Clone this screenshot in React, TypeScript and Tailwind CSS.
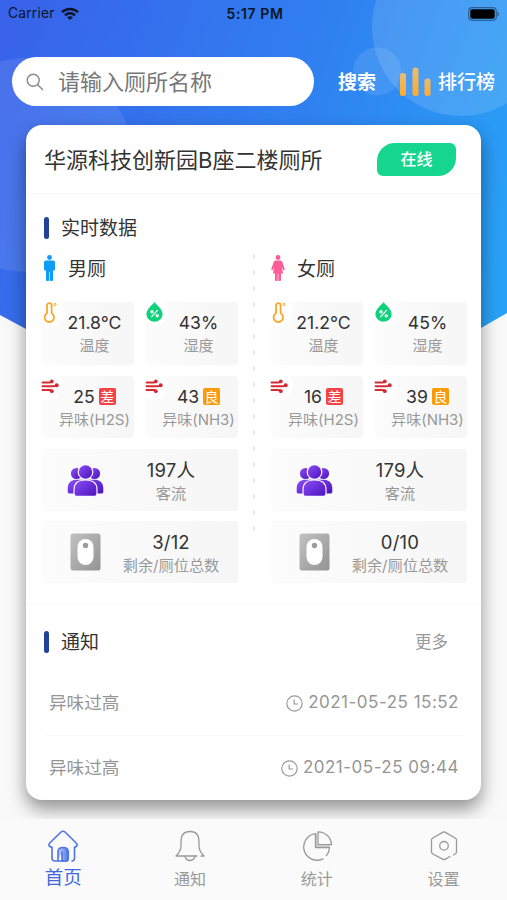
import type { ReactNode } from "react";

function Backdrop() {
  return (
    <svg className="absolute left-0 top-0" width="507" height="345" viewBox="0 0 507 345">
      <defs>
        <linearGradient id="sky" gradientUnits="userSpaceOnUse" x1="0" y1="60" x2="507" y2="240">
          <stop offset="0" stopColor="#3863ea" />
          <stop offset="0.55" stopColor="#3080f0" />
          <stop offset="1" stopColor="#29a1f6" />
        </linearGradient>
        <clipPath id="hero">
          <path d="M0 0H507V313L481 328L460 340H48L26 329L0 315Z" />
        </clipPath>
      </defs>
      <g clipPath="url(#hero)">
        <rect width="507" height="345" fill="url(#sky)" />
        <circle cx="28" cy="165" r="107" fill="#fff" fillOpacity="0.09" />
        <circle cx="461" cy="27" r="89" fill="#fff" fillOpacity="0.13" />
        <circle cx="377" cy="71.500" r="24" fill="#fff" fillOpacity="0.1" />
      </g>
    </svg>
  );
}

function StatusBar() {
  return (
    <div className="flex h-[27px] items-center justify-between pl-2 pr-[7px] text-[#0b1526]">
      <div className="flex w-[198px] items-center gap-[6px] text-[13.800px] tracking-[0.2px]">
        <span>Carrier</span>
        <svg width="18" height="14" viewBox="0 0 18 14">
          <g fill="none" stroke="#0b1526" strokeWidth="2.500">
            <path d="M1 5.200C5.500 .9 12.500 .9 17 5.200" />
            <path d="M4 8.300C6.800 5.700 11.200 5.700 14 8.300" />
          </g>
          <path d="M6 10.200C7.700 8.900 10.300 8.900 12 10.200L9 13Z" fill="#0b1526" />
        </svg>
      </div>
      <span className="whitespace-nowrap text-[14px] font-semibold tracking-[0.6px]">5:17 PM</span>
      <div className="flex w-[196px] justify-end">
        <svg width="32" height="14" viewBox="0 0 32 14">
          <rect x="0.700" y="0.700" width="27.600" height="12.600" rx="3.500" fill="none" stroke="#2a5f97" strokeWidth="1.200" />
          <rect x="2.300" y="2.300" width="24.400" height="9.400" rx="2" fill="#000" />
          <path d="M29.500 4.500C31.500 5.300 31.500 8.700 29.500 9.500Z" fill="#2a5f97" />
        </svg>
      </div>
    </div>
  );
}

function SearchRow() {
  return (
    <div className="mt-[30px] flex h-[49px] items-center pl-3">
      <div className="flex h-full w-[302px] items-center rounded-full bg-white pl-[14px]">
        <svg width="18" height="18" viewBox="0 0 18 18" fill="none" stroke="#8a8a8a" strokeWidth="1.400">
          <circle cx="7.200" cy="7.200" r="6" />
          <path d="M11.500 11.500L17 17" />
        </svg>
        <span className="ml-[14px] text-[22px] leading-none text-[#777]">请输入厕所名称</span>
      </div>
      <span className="ml-6 pt-[2px] text-[19px] font-bold leading-none text-white">搜索</span>
      <svg className="ml-6" width="31" height="29" viewBox="0 0 31 29">
        <defs>
          <linearGradient id="gold" x1="0" y1="0" x2="0" y2="1">
            <stop offset="0" stopColor="#e5bd73" />
            <stop offset="1" stopColor="#ffab2e" />
          </linearGradient>
        </defs>
        <rect x="0" y="6" width="6" height="23" rx="2.500" fill="url(#gold)" />
        <rect x="12.500" y="0.500" width="6" height="28.500" rx="2.500" fill="url(#gold)" />
        <rect x="24.500" y="11.500" width="6" height="17.500" rx="2.500" fill="url(#gold)" />
      </svg>
      <span className="ml-[7px] pt-[2px] text-[19px] font-medium leading-none text-white">排行榜</span>
    </div>
  );
}

function Thermometer() {
  return (
    <svg width="14" height="21" viewBox="0 0 14 21" fill="none" stroke="#fba72b" strokeWidth="1.800">
      <path d="M4 11.200V3.500a2.300 2.300 0 0 1 4.600 0v7.700a4.700 4.700 0 1 1-4.600 0Z" />
      <circle cx="12" cy="2.500" r="1.100" strokeWidth="1" />
    </svg>
  );
}

function Drop() {
  return (
    <svg width="17" height="20" viewBox="0 0 17 20">
      <path d="M8.500 0C10.500 3.200 16.600 6.900 16.600 12.200a8.100 7.600 0 0 1-16.200 0C.4 6.900 6.500 3.200 8.500 0Z" fill="#10d17c" />
      <g fill="none" stroke="#fff" strokeWidth="1.200">
        <path d="M11.700 8.200L5.300 15.200" />
        <circle cx="6" cy="9.700" r="1.100" />
        <circle cx="11.200" cy="13.800" r="1.100" />
      </g>
    </svg>
  );
}

function Wind() {
  return (
    <svg width="18" height="15" viewBox="0 0 18 15">
      <g fill="none" stroke="#d52a31" strokeWidth="1.900" strokeLinecap="round">
        <path d="M1.500 3.500H8.500C10 3.500 10.800 3 11 2" />
        <path d="M1.500 7.300H12.500C14 7.300 15 7.100 15.500 6.500" />
        <path d="M1.500 11H8.500C10 11 10.800 11.500 11 12.500" />
      </g>
      <g fill="#d52a31">
        <circle cx="10.800" cy="2.400" r="1.900" />
        <circle cx="15.700" cy="6.300" r="2" />
        <circle cx="10.800" cy="12.200" r="1.900" />
      </g>
    </svg>
  );
}

function People() {
  return (
    <svg width="37" height="33" viewBox="0 0 37 33">
      <defs>
        <linearGradient id="violet" x1="0" y1="0" x2="1" y2="1">
          <stop offset="0" stopColor="#8b50f5" />
          <stop offset="1" stopColor="#4c10be" />
        </linearGradient>
      </defs>
      <g fill="url(#violet)">
        <circle cx="9.500" cy="9.500" r="5.600" />
        <circle cx="27.500" cy="9.500" r="5.600" />
        <path d="M.7 28V24.500C.7 19 4 16.500 8 15.800H29C33 16.500 36.300 19 36.300 24.500V28Q36.300 29.500 34.300 29.500H2.700Q.7 29.500 .7 28Z" />
      </g>
      <g fill="url(#violet)" stroke="#faf7ff" strokeWidth="1.200">
        <path d="M7 29.500V25.500C7 19.500 10.500 16 18.500 16S30 19.500 30 25.500V29.500Q30 32.400 27.500 32.400H9.500Q7 32.400 7 29.500Z" />
        <circle cx="18.500" cy="8" r="7.300" />
      </g>
    </svg>
  );
}

function Stall() {
  return (
    <svg width="31" height="38" viewBox="0 0 31 38">
      <defs>
        <linearGradient id="steel" x1="0" y1="0" x2="1" y2="1">
          <stop offset="0" stopColor="#c2c2c2" />
          <stop offset="1" stopColor="#939393" />
        </linearGradient>
      </defs>
      <rect x="0.500" y="0.500" width="30" height="37" rx="2.500" fill="url(#steel)" />
      <rect x="7.500" y="6" width="16" height="26" rx="8" fill="#fff" />
      <circle cx="15.500" cy="12.500" r="2.700" fill="#9b9b9b" />
    </svg>
  );
}

function Man() {
  return (
    <svg width="11" height="26" viewBox="0 0 11 26" fill="#0e9cf7">
      <circle cx="5.500" cy="2.500" r="2.400" />
      <path d="M2 5.500H9Q11 5.500 11 7.500V14.500Q11 15.500 9.500 15.500H9V25Q9 26 8 26H6.500Q5.800 26 5.800 25V17H5.200V25Q5.200 26 4.500 26H3Q2 26 2 25V15.500H1.500Q0 15.500 0 14.500V7.500Q0 5.500 2 5.500Z" />
    </svg>
  );
}

function Woman() {
  return (
    <svg width="14" height="26" viewBox="0 0 14 26" fill="#ff5c98">
      <circle cx="7" cy="2.500" r="2.400" />
      <path d="M4.500 5.500H9.500Q10.800 5.500 11.300 7L13.700 14Q13.700 15.500 12.400 15.200L10.800 12L12 18.500H10V25Q10 26 9 26H8Q7.300 26 7.300 25V18.500H6.700V25Q6.700 26 6 26H5Q4 26 4 25V18.500H2L3.200 12L1.600 15.200Q.3 15.500 .3 14L2.700 7Q3.200 5.500 4.500 5.500Z" />
    </svg>
  );
}

const tile = "bg-gradient-to-r from-[#fcfcfc] to-[#f6f6f6] rounded-[4px]";

function Sensor({ icon, value, label, badge, badgeClass }: { icon: ReactNode; value: string; label: string; badge?: string; badgeClass?: string }) {
  return (
    <div className={"relative w-[92px] pl-[13px] pt-[9px] text-center leading-[23px] " + tile}>
      <div className="absolute -left-[6px] -top-[4px] flex size-7 items-center justify-center rounded-full bg-white">{icon}</div>
      <div className="flex h-[23px] items-center justify-center gap-1 whitespace-nowrap text-[17.600px] text-[#333]">
        <span>{value}</span>
        {badge && (
          <span className={"flex size-[17px] items-center justify-center rounded-[2px] text-[14px] leading-none text-white " + badgeClass}>{badge}</span>
        )}
      </div>
      <div className="flex justify-center whitespace-nowrap text-[15px] text-[#999]">{label}</div>
    </div>
  );
}

function Wide({ icon, value, label }: { icon: ReactNode; value: string; label: string }) {
  return (
    <div className={"flex h-[62px] " + tile}>
      <div className="flex w-[86px] items-center justify-center">{icon}</div>
      <div className="w-[86px] grow pr-[24px] pt-[9px]">
        <div className="flex justify-center whitespace-nowrap text-[18.500px] leading-[24px] tracking-[0.2px] text-[#333]">{value}</div>
        <div className="flex justify-center whitespace-nowrap text-[15.200px] leading-[23px] text-[#999]">{label}</div>
      </div>
    </div>
  );
}

interface Room {
  name: string;
  icon: ReactNode;
  temp: string;
  hum: string;
  h2s: string;
  nh3: string;
  people: string;
  stalls: string;
}

function RoomColumn({ room }: { room: Room }) {
  return (
    <div className="w-[196px]">
      <div className="flex h-7 items-center">
        <div className="flex w-[14px] justify-center">{room.icon}</div>
        <span className="ml-[12px] pt-[2px] text-[19px] leading-none text-[#333]">{room.name}</span>
      </div>
      <div className="mt-[20px] flex h-[63px] justify-between">
        <Sensor icon={<Thermometer />} value={room.temp} label="温度" />
        <Sensor icon={<Drop />} value={room.hum} label="湿度" />
      </div>
      <div className="mt-[11px] flex h-[62px] justify-between">
        <Sensor icon={<Wind />} value={room.h2s} label="异味(H2S)" badge="差" badgeClass="bg-[#f64245]" />
        <Sensor icon={<Wind />} value={room.nh3} label="异味(NH3)" badge="良" badgeClass="bg-[#fb9b0b]" />
      </div>
      <div className="mt-[11px]">
        <Wide icon={<People />} value={room.people} label="客流" />
      </div>
      <div className="mt-[10px]">
        <Wide icon={<Stall />} value={room.stalls} label="剩余/厕位总数" />
      </div>
    </div>
  );
}

function SectionTitle({ children }: { children: ReactNode }) {
  return (
    <div className="flex items-center gap-3">
      <div className="h-[22px] w-[5px] rounded-[3px] bg-[#214296]" />
      <span className="pt-px text-[19px] leading-none text-[#333]">{children}</span>
    </div>
  );
}

function Notice({ time }: { time: string }) {
  return (
    <div className="flex h-[64px] items-center justify-between pl-[5px] pr-1 text-[17.600px] text-[#969696]">
      <span className="pt-px">异味过高</span>
      <div className="flex items-center gap-[5px]">
        <svg width="17" height="17" viewBox="0 0 17 17" fill="none" stroke="#9a9a9a" strokeWidth="1.200">
          <circle cx="8.500" cy="8.500" r="7.700" />
          <path d="M8.200 4.500V9H12" />
        </svg>
        <span className="text-[17px] tracking-[0.500px]">{time}</span>
      </div>
    </div>
  );
}

const rooms: Room[] = [
  { name: "男厕", icon: <Man />, temp: "21.8°C", hum: "43%", h2s: "25", nh3: "43", people: "197人", stalls: "3/12" },
  { name: "女厕", icon: <Woman />, temp: "21.2°C", hum: "45%", h2s: "16", nh3: "39", people: "179人", stalls: "0/10" },
];

function Card() {
  return (
    <div className="mx-[26px] mt-[19px] h-[675px] rounded-[16px] bg-white shadow-[0_9px_18px_rgba(0,0,0,0.42)]">
      <div className="flex h-[69px] items-center justify-between border-b border-[#f8f8f8] pl-[18px] pr-[25px]">
        <span className="pt-[2px] text-[22px] leading-none text-[#333]">华源科技创新园B座二楼厕所</span>
        <div className="flex h-[33px] w-[79px] items-center justify-center rounded-bl-[6px] rounded-br-[18px] rounded-tl-[18px] rounded-tr-[6px] bg-[#16d68f] text-[16px] font-medium text-white">在线</div>
      </div>
      <div className="h-[411px] border-b border-[#f8f8f8] pl-4 pt-[23px]">
        <div className="pl-[2px]">
          <SectionTitle>实时数据</SectionTitle>
        </div>
        <div className="mt-[15px] flex">
          <RoomColumn room={rooms[0]} />
          <svg className="mx-[15px]" width="3" height="282" viewBox="0 0 3 282">
            <path d="M1 0V282" stroke="#ebebeb" strokeWidth="2" strokeDasharray="5 11" />
          </svg>
          <RoomColumn room={rooms[1]} />
        </div>
      </div>
      <div className="px-[18px] pt-[26px]">
        <div className="flex items-center justify-between pr-[15px]">
          <SectionTitle>通知</SectionTitle>
          <span className="pt-px text-[16.500px] leading-none text-[#999]">更多</span>
        </div>
        <div className="mt-[18px] border-b border-[#f8f8f8]">
          <Notice time="2021-05-25 15:52" />
        </div>
        <Notice time="2021-05-25 09:44" />
      </div>
    </div>
  );
}

function NavItem({ icon, label, active }: { icon: ReactNode; label: string; active?: boolean }) {
  return (
    <div className="flex flex-1 flex-col items-center pt-[11px]">
      {icon}
      <span className={active ? "mt-[5px] text-[18.500px] leading-[20px] text-[#3f68df]" : "mt-[7px] text-[16px] leading-[20px] text-[#999]"}>{label}</span>
    </div>
  );
}

function TabBar() {
  return (
    <div className="relative flex h-[81px] bg-[#fafafa]">
      <NavItem
        active
        label="首页"
        icon={
          <svg width="32" height="32" viewBox="0 0 32 32" fill="none" stroke="#4d75e5" strokeWidth="1.600" strokeLinecap="round" strokeLinejoin="round">
            <defs>
              <linearGradient id="door" x1="0" y1="0" x2="1" y2="0">
                <stop offset="0" stopColor="#c7d5fb" />
                <stop offset="1" stopColor="#4d75e5" />
              </linearGradient>
            </defs>
            <path d="M25 31Q27.500 31 27.500 28V17H28.500Q31.300 15.500 29.200 13L18 2Q16 .4 14 2L2.800 13Q.7 15.500 3.500 17H5V28Q5 31 8 31H20.500" />
            <path d="M11 30.500V22Q11 17.500 16 17.500Q21.300 17.500 21.300 22V28.500Q21.300 31 18.500 31H15V22" fill="url(#door)" />
          </svg>
        }
      />
      <NavItem
        label="通知"
        icon={
          <svg width="32" height="32" viewBox="0 0 32 32" fill="none" stroke="#999" strokeWidth="1.300" strokeLinecap="round" strokeLinejoin="round">
            <path d="M23 26H2Q7 21 7 16V12Q7 1.500 16 1.500Q25 1.500 25 12V16Q25 21 30 26H27" />
            <path d="M11 26.500Q12.500 30.500 16 30.500T21 26.500" />
          </svg>
        }
      />
      <NavItem
        label="统计"
        icon={
          <svg width="32" height="32" viewBox="0 0 32 32" fill="none" stroke="#999" strokeWidth="1.300" strokeLinecap="round" strokeLinejoin="round">
            <path d="M22 28.800A13.300 13.300 0 1 1 14.500 3.700V17.500H28.500Q28.300 22 25.500 25.500" />
            <path d="M17 1.800V14.600H30.500A13.300 13.300 0 0 0 17 1.800Z" />
            <path d="M15.700 4V16H28.500" stroke="#c4c4c4" />
          </svg>
        }
      />
      <NavItem
        label="设置"
        icon={
          <svg width="32" height="32" viewBox="0 0 32 32" fill="none" stroke="#999" strokeWidth="1.300" strokeLinecap="round" strokeLinejoin="round">
            <path d="M22 26.500L17 29.400Q16 30 15 29.400L4.500 23.700Q3.500 23 3.500 22V10Q3.500 9 4.500 8.300L15 2.100Q16 1.500 17 2.100L27.500 8.300Q28.500 9 28.500 10V22Q28.500 23 27.500 23.700L25.500 25" />
            <circle cx="16" cy="15.800" r="4.300" />
          </svg>
        }
      />
    </div>
  );
}

export default function App() {
  return (
    <div className="relative h-[900px] w-[507px] overflow-hidden bg-[#f9f9f9] font-['Inter','Noto_Sans_CJK_SC',sans-serif]">
      <Backdrop />
      <div className="relative flex h-full flex-col justify-between">
        <div>
          <StatusBar />
          <SearchRow />
          <Card />
        </div>
        <TabBar />
      </div>
    </div>
  );
}
